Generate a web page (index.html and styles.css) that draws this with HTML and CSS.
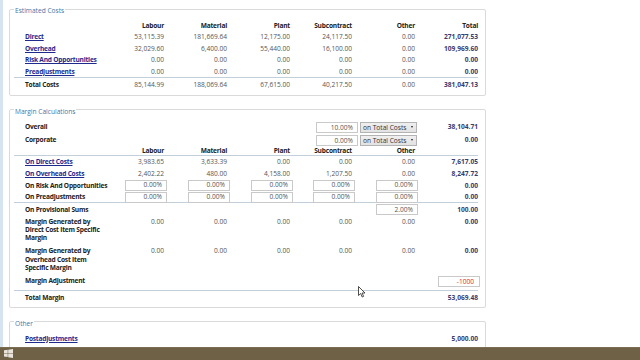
FILE: index.html
```html
<!DOCTYPE html>
<html>
<head>
<meta charset="utf-8">
<title>Costs</title>
<link rel="stylesheet" href="styles.css">
</head>
<body>
<div class="app">
  <div class="side"></div>
  <main class="main">
    <fieldset class="box est">
      <legend>Estimated Costs</legend>
      <div class="row head"><span></span><span>Labour</span><span>Material</span><span>Plant</span><span>Subcontract</span><span>Other</span><span>Total</span></div>
      <div class="row"><a class="lbl link" href="#">Direct</a><span>53,115.39</span><span>181,669.64</span><span>12,175.00</span><span>24,117.50</span><span>0.00</span><span class="tot">271,077.53</span></div>
      <div class="row"><a class="lbl link" href="#">Overhead</a><span>32,029.60</span><span>6,400.00</span><span>55,440.00</span><span>16,100.00</span><span>0.00</span><span class="tot">109,969.60</span></div>
      <div class="row"><a class="lbl link" href="#">Risk And Opportunities</a><span>0.00</span><span>0.00</span><span>0.00</span><span>0.00</span><span>0.00</span><span class="tot">0.00</span></div>
      <div class="row"><a class="lbl link" href="#">Preadjustments</a><span>0.00</span><span>0.00</span><span>0.00</span><span>0.00</span><span>0.00</span><span class="tot">0.00</span></div>
      <div class="row total"><span class="lbl">Total Costs</span><span>85,144.99</span><span>188,069.64</span><span>67,615.00</span><span>40,217.50</span><span>0.00</span><span class="tot">381,047.13</span></div>
    </fieldset>

    <fieldset class="box margin">
      <legend>Margin Calculations</legend>
      <div class="row ctrl"><span class="lbl">Overall</span><span class="controls"><span class="inp">10.00%</span><span class="sel">on Total Costs<span class="caret"></span></span></span><span class="tot">38,104.71</span></div>
      <div class="row ctrl"><span class="lbl">Corporate</span><span class="controls"><span class="inp">0.00%</span><span class="sel">on Total Costs<span class="caret"></span></span></span><span class="tot">0.00</span></div>
      <div class="row head mhead"><span></span><span>Labour</span><span>Material</span><span>Plant</span><span>Subcontract</span><span>Other</span><span></span></div>
      <div class="row mrow"><a class="lbl link" href="#">On Direct Costs</a><span>3,983.65</span><span>3,633.39</span><span>0.00</span><span>0.00</span><span>0.00</span><span class="tot">7,617.05</span></div>
      <div class="row mrow"><a class="lbl link" href="#">On Overhead Costs</a><span>2,402.22</span><span>480.00</span><span>4,158.00</span><span>1,207.50</span><span>0.00</span><span class="tot">8,247.72</span></div>
      <div class="row mrow"><span class="lbl">On Risk And Opportunities</span><span><span class="inp cell">0.00%</span></span><span><span class="inp cell">0.00%</span></span><span><span class="inp cell">0.00%</span></span><span><span class="inp cell">0.00%</span></span><span><span class="inp cell">0.00%</span></span><span class="tot">0.00</span></div>
      <div class="row mrow sep"><span class="lbl">On Preadjustments</span><span><span class="inp cell">0.00%</span></span><span><span class="inp cell">0.00%</span></span><span><span class="inp cell">0.00%</span></span><span><span class="inp cell">0.00%</span></span><span><span class="inp cell">0.00%</span></span><span class="tot">0.00</span></div>
      <div class="row prow"><span class="lbl">On Provisional Sums</span><span></span><span></span><span></span><span></span><span><span class="inp cell">2.00%</span></span><span class="tot">100.00</span></div>
      <div class="row gen"><span class="lbl">Margin Generated by<br>Direct Cost Item Specific<br>Margin</span><span>0.00</span><span>0.00</span><span>0.00</span><span>0.00</span><span>0.00</span><span class="tot">0.00</span></div>
      <div class="row gen gen2"><span class="lbl">Margin Generated by<br>Overhead Cost Item<br>Specific Margin</span><span>0.00</span><span>0.00</span><span>0.00</span><span>0.00</span><span>0.00</span><span class="tot">0.00</span></div>
      <div class="row adj"><span class="lbl">Margin Adjustment</span><span class="adjcell"><span class="inp cell neg">-1000</span></span></div>
      <div class="row total mtotal"><span class="lbl">Total Margin</span><span></span><span></span><span></span><span></span><span></span><span class="tot">53,069.48</span></div>
    </fieldset>

    <fieldset class="box other">
      <legend>Other</legend>
      <div class="row"><a class="lbl link" href="#">Postadjustments</a><span></span><span></span><span></span><span></span><span></span><span class="tot">5,000.00</span></div>
      <div class="row"><span class="lbl">Total Other</span><span></span><span></span><span></span><span></span><span></span><span class="tot">5,000.00</span></div>
    </fieldset>
  </main>
</div>

<svg class="cursor" width="8" height="12" viewBox="0 0 8 12"><path d="M0.5 0.5 L0.5 9.5 L2.7 7.5 L4.2 11 L5.6 10.4 L4.1 7 L7 7 Z" fill="#fff" stroke="#222" stroke-width="0.8" stroke-linejoin="round"/></svg>

<div class="taskbar">
  <svg class="winlogo" width="9" height="9" viewBox="0 0 9 9"><path d="M0 1.3 L3.7 0.8 L3.7 4.2 L0 4.2 Z M4.2 0.7 L9 0 L9 4.2 L4.2 4.2 Z M0 4.7 L3.7 4.7 L3.7 8.1 L0 7.6 Z M4.2 4.7 L9 4.7 L9 9 L4.2 8.3 Z" fill="#e8e4dc"/></svg>
</div>
</body>
</html>
```

FILE: styles.css
```css
html, body {
  margin: 0;
  height: 100%;
  overflow: hidden;
  background: #fff;
}
body {
  font-family: "Open Sans", "Noto Sans", sans-serif;
  font-size: 6.6px;
  color: #555;
}
.app {
  display: flex;
  height: 100%;
}
.side {
  flex: none;
  width: 3px;
  background: #d6e4f2;
}
.main {
  flex: none;
  width: 477px;
  padding-left: 6px;
}
.box {
  margin: 4px 0 0;
  border: 1px solid #dadada;
  border-radius: 2px;
  padding: 5.75px 4px 4px;
  min-width: 0;
}
.margin { margin-top: 9px; }
.other { margin-top: 8.8px; }
legend {
  padding: 3px 1px 0;
  line-height: 7px;
  font-size: 6.6px;
  color: #4474aa;
}
.row {
  display: grid;
  grid-template-columns: 87px 63px 63px 63px 62px 63px 63px;
  margin-right: 3px;
  line-height: 11.5px;
  text-align: right;
  white-space: nowrap;
}
.lbl {
  text-align: left;
  padding-left: 11px;
  font-weight: bold;
  color: #222;
  letter-spacing: -0.22px;
}
.link {
  color: #1f2a8c;
  text-decoration: underline;
}
.head span {
  font-weight: bold;
  color: #222;
  letter-spacing: -0.2px;
}
.tot {
  font-weight: bold;
  color: #383a6e;
}
.total {
  border-top: 1px solid #c3d0dc;
  padding-top: 1px;
}

/* margin section */
.ctrl {
  height: 13px;
  align-items: center;
}
.controls {
  grid-column: 2 / 7;
  display: flex;
  justify-content: flex-end;
  gap: 2px;
  margin-right: -2px;
}
.inp {
  display: block;
  box-sizing: border-box;
  width: 42px;
  height: 11px;
  border: 1px solid #c9c9c9;
  padding-right: 4px;
  background: #fff;
  color: #555;
  text-align: right;
  line-height: 9px;
}
.sel {
  box-sizing: border-box;
  width: 57px;
  height: 11px;
  border: 1px solid #b3b3b3;
  background: linear-gradient(#efefef, #e2e2e2);
  color: #333;
  line-height: 9px;
  padding-left: 2px;
  text-align: left;
  position: relative;
}
.caret {
  position: absolute;
  right: 3px;
  top: 3.5px;
  border-left: 1.5px solid transparent;
  border-right: 1.5px solid transparent;
  border-top: 2px solid #222;
}
.mhead {
  line-height: 8.5px;
  border-bottom: 1px solid #c3d0dc;
}
.mrow {
  height: 11.8px;
  line-height: 11.8px;
  align-items: center;
}
.inp.cell {
  height: 10.5px;
  line-height: 8.5px;
  margin-left: auto;
  margin-right: -3px;
}
.sep {
  border-bottom: 1px solid #c3d0dc;
  height: 11px;
}
.prow {
  height: 14.5px;
  align-items: start;
  padding-top: 0.8px;
  box-sizing: border-box;
}
.prow .inp.cell { height: 11px; line-height: 9px; }
.prow .lbl, .prow .tot { line-height: 11px; }
.gen {
  line-height: 8.3px;
  padding-bottom: 4.7px;
}
.gen2 {
  padding-bottom: 2.2px;
}
.adj {
  height: 13px;
  align-items: center;
  padding-bottom: 2px;
  border-bottom: 1px solid #c3d0dc;
}
.adjcell {
  grid-column: 7;
}
.inp.neg {
  color: #e3262a;
  margin-right: -2px;
  height: 11px;
  line-height: 9px;
  padding-right: 5px;
}
.mtotal {
  border-top: none;
  padding-top: 1px;
}

/* overlays */
.cursor {
  position: fixed;
  left: 358px;
  top: 285.5px;
}
.taskbar {
  position: fixed;
  left: 0;
  right: 0;
  bottom: 0;
  height: 13.3px;
  background: #6f6146;
  border-top: 1px solid #7b6d52;
  box-sizing: border-box;
  display: flex;
  align-items: center;
  padding-left: 4px;
}
.winlogo {
  display: block;
}
```
